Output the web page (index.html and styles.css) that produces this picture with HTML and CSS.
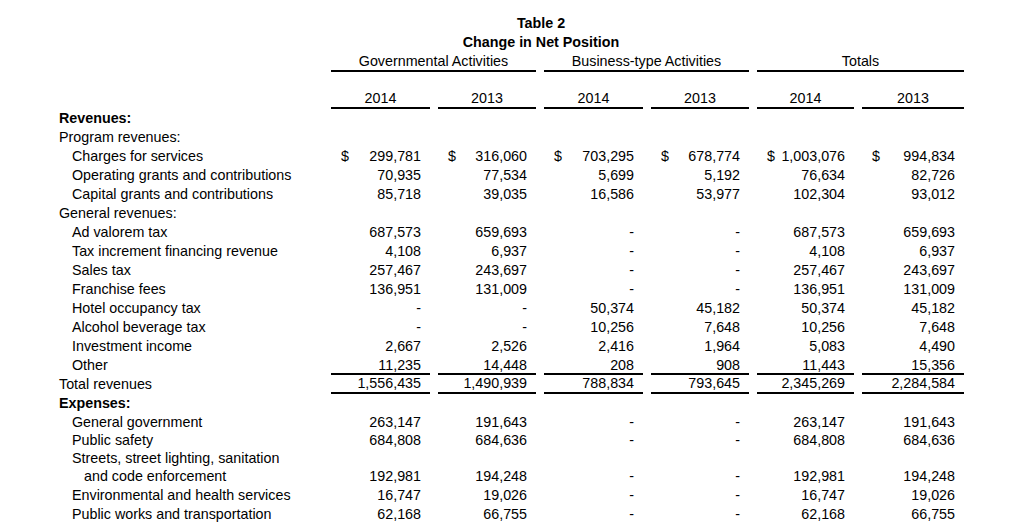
FILE: index.html
```html
<!DOCTYPE html>
<html lang="en">
<head>
<meta charset="utf-8">
<title>Table 2 - Change in Net Position</title>
<link rel="stylesheet" href="styles.css">
</head>
<body>
<div class="report">
  <div class="title">Table 2</div>
  <div class="title">Change in Net Position</div>
  <div class="sheet">
    <div class="blank"></div>
    <div class="group">Governmental Activities</div>
    <div class="group">Business-type Activities</div>
    <div class="group">Totals</div>

    <div class="blank"></div>
    <div class="year">2014</div><div class="year">2013</div>
    <div class="year">2014</div><div class="year">2013</div>
    <div class="year">2014</div><div class="year">2013</div>

    <div class="row"><div class="label bold">Revenues:</div></div>
    <div class="row"><div class="label">Program revenues:</div></div>
    <div class="row"><div class="label l1">Charges for services</div>
      <div class="num dollar"><span>$</span><span>299,781</span></div>
      <div class="num dollar"><span>$</span><span>316,060</span></div>
      <div class="num dollar"><span>$</span><span>703,295</span></div>
      <div class="num dollar"><span>$</span><span>678,774</span></div>
      <div class="num dollar"><span>$</span><span>1,003,076</span></div>
      <div class="num dollar"><span>$</span><span>994,834</span></div>
    </div>
    <div class="row"><div class="label l1">Operating grants and contributions</div>
      <div class="num">70,935</div><div class="num">77,534</div><div class="num">5,699</div><div class="num">5,192</div><div class="num">76,634</div><div class="num">82,726</div>
    </div>
    <div class="row"><div class="label l1">Capital grants and contributions</div>
      <div class="num">85,718</div><div class="num">39,035</div><div class="num">16,586</div><div class="num">53,977</div><div class="num">102,304</div><div class="num">93,012</div>
    </div>
    <div class="row"><div class="label">General revenues:</div></div>
    <div class="row"><div class="label l1">Ad valorem tax</div>
      <div class="num">687,573</div><div class="num">659,693</div><div class="num">-</div><div class="num">-</div><div class="num">687,573</div><div class="num">659,693</div>
    </div>
    <div class="row"><div class="label l1">Tax increment financing revenue</div>
      <div class="num">4,108</div><div class="num">6,937</div><div class="num">-</div><div class="num">-</div><div class="num">4,108</div><div class="num">6,937</div>
    </div>
    <div class="row"><div class="label l1">Sales tax</div>
      <div class="num">257,467</div><div class="num">243,697</div><div class="num">-</div><div class="num">-</div><div class="num">257,467</div><div class="num">243,697</div>
    </div>
    <div class="row"><div class="label l1">Franchise fees</div>
      <div class="num">136,951</div><div class="num">131,009</div><div class="num">-</div><div class="num">-</div><div class="num">136,951</div><div class="num">131,009</div>
    </div>
    <div class="row"><div class="label l1">Hotel occupancy tax</div>
      <div class="num">-</div><div class="num">-</div><div class="num">50,374</div><div class="num">45,182</div><div class="num">50,374</div><div class="num">45,182</div>
    </div>
    <div class="row"><div class="label l1">Alcohol beverage tax</div>
      <div class="num">-</div><div class="num">-</div><div class="num">10,256</div><div class="num">7,648</div><div class="num">10,256</div><div class="num">7,648</div>
    </div>
    <div class="row"><div class="label l1">Investment income</div>
      <div class="num">2,667</div><div class="num">2,526</div><div class="num">2,416</div><div class="num">1,964</div><div class="num">5,083</div><div class="num">4,490</div>
    </div>
    <div class="row"><div class="label l1">Other</div>
      <div class="num">11,235</div><div class="num">14,448</div><div class="num">208</div><div class="num">908</div><div class="num">11,443</div><div class="num">15,356</div>
    </div>
    <div class="row total"><div class="label">Total revenues</div>
      <div class="num">1,556,435</div><div class="num">1,490,939</div><div class="num">788,834</div><div class="num">793,645</div><div class="num">2,345,269</div><div class="num">2,284,584</div>
    </div>
    <div class="row"><div class="label bold">Expenses:</div></div>
    <div class="row"><div class="label l1">General government</div>
      <div class="num">263,147</div><div class="num">191,643</div><div class="num">-</div><div class="num">-</div><div class="num">263,147</div><div class="num">191,643</div>
    </div>
    <div class="row"><div class="label l1">Public safety</div>
      <div class="num">684,808</div><div class="num">684,636</div><div class="num">-</div><div class="num">-</div><div class="num">684,808</div><div class="num">684,636</div>
    </div>
    <div class="row"><div class="label l1">Streets, street lighting, sanitation</div></div>
    <div class="row"><div class="label l2">and code enforcement</div>
      <div class="num">192,981</div><div class="num">194,248</div><div class="num">-</div><div class="num">-</div><div class="num">192,981</div><div class="num">194,248</div>
    </div>
    <div class="row"><div class="label l1">Environmental and health services</div>
      <div class="num">16,747</div><div class="num">19,026</div><div class="num">-</div><div class="num">-</div><div class="num">16,747</div><div class="num">19,026</div>
    </div>
    <div class="row"><div class="label l1">Public works and transportation</div>
      <div class="num">62,168</div><div class="num">66,755</div><div class="num">-</div><div class="num">-</div><div class="num">62,168</div><div class="num">66,755</div>
    </div>
  </div>
</div>
</body>
</html>
```

FILE: styles.css
```css
html, body {
  margin: 0;
  padding: 0;
  background: #ffffff;
}

body {
  font-family: "Liberation Sans", Arial, sans-serif;
  font-size: 14.3px;
  color: #000000;
  overflow: hidden;
}

.report {
  padding: 14px 0 0 59px;
}

.title {
  width: 964px;
  text-align: center;
  font-weight: bold;
  line-height: 19px;
  height: 19px;
}

.sheet {
  display: grid;
  grid-template-columns: 264px 99px 98px 99px 98px 97px 102px;
  /* header rows, then 17 regular rows, then the tighter wrapped block */
  grid-template-rows: 20px 36.5px repeat(17, 19px) 17px 18px 18.4px 19.6px 19px;
  column-gap: 8px;
}

.row {
  display: contents;
}

.row > .label {
  grid-column: 1;
}

.blank {
  grid-column: 1;
}

.group {
  grid-column: span 2;
  text-align: center;
  line-height: 18px;
  border-bottom: 2px solid #000;
}

.year {
  display: flex;
  align-items: flex-end;
  justify-content: center;
  line-height: 18px;
  border-bottom: 2px solid #000;
}

.label {
  display: flex;
  align-items: center;
  white-space: nowrap;
}

.l1 {
  padding-left: 13px;
}

.l2 {
  padding-left: 25px;
}

.bold {
  font-weight: bold;
}

.num {
  display: flex;
  align-items: center;
  justify-content: flex-end;
  padding: 0 9px 0 10px;
  white-space: nowrap;
}

.num.dollar {
  justify-content: space-between;
}

.total .num {
  box-sizing: border-box;
  border-top: 2px solid #000;
  border-bottom: 2px solid #000;
  margin-top: -2px;
}
```
